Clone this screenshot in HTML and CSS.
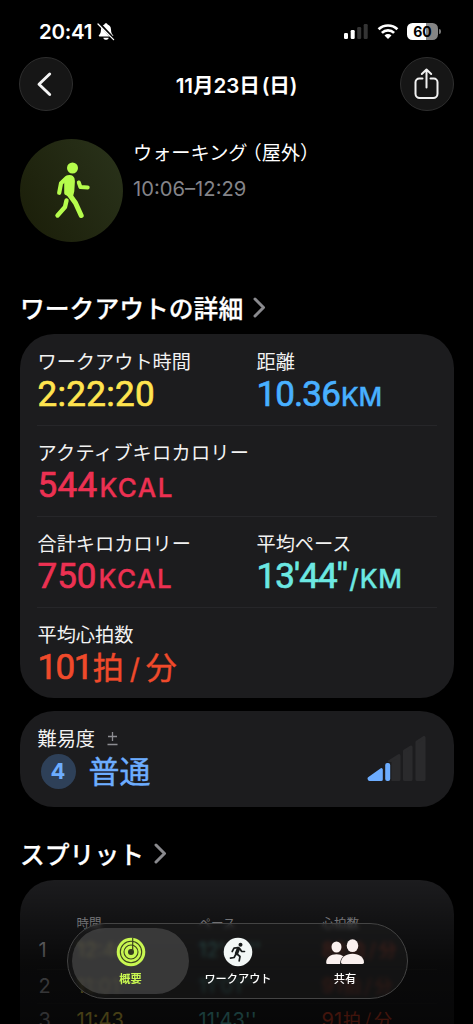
FILE: index.html
```html
<!DOCTYPE html>
<html lang="ja">
<head>
<meta charset="utf-8">
<title>ワークアウト</title>
<link rel="stylesheet" href="styles.css">
</head>
<body>
<div class="screen">
  <div class="status">
    <span class="clock">20:41</span>
    <svg class="bell" width="18" height="19" viewBox="0 0 18 19"><path d="M9 1.200c.9 0 1.500.6 1.600 1.400 2 .7 3.300 2.300 3.400 4.800.1 3 .7 4.300 2 5.700.5.6.2 1.400-.6 1.400H2.600c-.8 0-1.100-.8-.6-1.400 1.300-1.400 1.900-2.700 2-5.700C4.100 4.900 5.400 3.300 7.400 2.600 7.500 1.800 8.100 1.200 9 1.200z" fill="#fff"/><path d="M6.300 15.700h5.400c-.3 1.300-1.300 2.100-2.700 2.100s-2.400-.8-2.700-2.100z" fill="#fff"/><path d="M1.800 1l15 16" stroke="#000" stroke-width="2.600"/><path d="M1 2l15.600 15.600" stroke="#fff" stroke-width="1.300" stroke-linecap="round"/></svg>
    <svg class="cell" width="25" height="17" viewBox="0 0 25 17"><rect x="0" y="10" width="4" height="6" rx="1.200" fill="#fff"/><rect x="6.700" y="7" width="4" height="9" rx="1.200" fill="#fff"/><rect x="13.200" y="4" width="4" height="12" rx="1.200" fill="#343434"/><rect x="19.700" y="1" width="4" height="15" rx="1.200" fill="#343434"/></svg>
    <svg class="wifi" width="22" height="17" viewBox="0 0 22 17"><g fill="none" stroke="#fff" stroke-width="2.700"><path d="M1.600 6.300a13.500 13.500 0 0 1 18.800 0"/><path d="M4.900 9.900a8.800 8.800 0 0 1 12.200 0"/></g><path d="M11 16l-3.500-3.500a5 5 0 0 1 7 0z" fill="#fff"/></svg>
    <span class="battery"><span class="battery-body">60</span><i></i></span>
  </div>

  <header class="nav">
    <button class="round"><svg width="54" height="54" viewBox="0 0 54 54"><path d="M30.700 17l-10.700 10.300 10.700 10.200" fill="none" stroke="#f4f4f4" stroke-width="2.900" stroke-linecap="round" stroke-linejoin="round"/></svg></button>
    <h1>11月23日<span class="paren">(日)</span></h1>
    <button class="round"><svg width="54" height="54" viewBox="0 0 54 54"><g fill="none" stroke="#f2f2f2" stroke-width="2" stroke-linecap="round" stroke-linejoin="round"><path d="M22.500 21.500h-3.300a3.700 3.700 0 0 0-3.700 3.700v11.500a4.300 4.300 0 0 0 4.300 4.300h13.400a4.300 4.300 0 0 0 4.300-4.300V25.200a3.700 3.700 0 0 0-3.700-3.700h-3.300"/><path d="M26.500 30.500V13M21.800 17l4.700-4.500 4.700 4.500"/></g></svg></button>
  </header>

  <section class="hero">
    <div class="badge"><svg width="103" height="103" viewBox="0 0 103 103"><g fill="#b5fc4c" stroke="#b5fc4c" stroke-linecap="round" stroke-linejoin="round"><circle cx="52.500" cy="29" r="5.500" stroke="none"/><path d="M46.500 39L41 44.300l-1.800 9.500" fill="none" stroke-width="4.200"/><path d="M48 38.500Q52.700 37.500 52.600 42L52 52l-1 4-4.500-2V41z" stroke-width="4.600"/><path d="M49 55l6.500 9 5.700 12.500" fill="none" stroke-width="5"/><path d="M46.500 61.500L45 68l-7.500 8.500" fill="none" stroke-width="4.400"/><path d="M58.800 43.500l1.600 4.500 7.300.4" fill="none" stroke-width="4"/></g></svg></div>
    <div class="hero-text">
      <div class="sport">ウォーキング<span>（屋外）</span></div>
      <div class="range">10:06–12:29</div>
    </div>
  </section>

  <h2 class="details-title">ワークアウトの詳細<svg width="13" height="21" viewBox="0 0 13 21"><path d="M2 2l8.500 8.500L2 19" /></svg></h2>
  <section class="card metrics">
    <div class="row">
      <div class="metric"><span class="label">ワークアウト時間</span><span class="value yellow">2:22:20</span></div>
      <div class="metric"><span class="label">距離</span><span class="value blue distance">10.36<small>KM</small></span></div>
    </div>
    <div class="row">
      <div class="metric"><span class="label wide">アクティブキロカロリー</span><span class="value red">544<small>KCAL</small></span></div>
    </div>
    <div class="row">
      <div class="metric"><span class="label">合計キロカロリー</span><span class="value red total">750<small>KCAL</small></span></div>
      <div class="metric"><span class="label">平均ペース</span><span class="value cyan pace">13'44<span class="seconds">''</span><small>/KM</small></span></div>
    </div>
    <div class="row">
      <div class="metric"><span class="label">平均心拍数</span><span class="value orange heart">101<span class="unit">拍<b>/</b>分</span></span></div>
    </div>
  </section>

  <section class="card effort">
    <div>
      <div class="label">難易度<svg width="11" height="15" viewBox="0 0 11 15"><path d="M5.500 1v9M1 5.500h9M.5 13.500h10" stroke="#8d8d92" stroke-width="1.300" fill="none"/></svg></div>
      <div class="level"><span class="num">4</span><span class="word">普通</span></div>
    </div>
    <svg class="bars" width="59" height="46" viewBox="0 0 59 46"><g fill="#2a2a2c" stroke="#2a2a2c" stroke-width="3" stroke-linejoin="round"><path d="M22.500 25.500l9.500-6v24H22.500z"/><path d="M37.500 15l6.500-4v32.500h-6.500z"/><path d="M50 6l7-4.500v42h-7z"/></g><path d="M2 42.500l12.300-8.800v9.800H2.500z" fill="#6dadff" stroke="#6dadff" stroke-width="3" stroke-linejoin="round"/><rect x="17" y="26" width="7.500" height="20" fill="#1c1c1e"/><rect x="18.200" y="27" width="5" height="18" rx="2" fill="#6dadff"/></svg>
  </section>

  <h2 class="split-title">スプリット<svg width="13" height="21" viewBox="0 0 13 21"><path d="M2 2l8.500 8.500L2 19" /></svg></h2>
  <section class="card splits">
    <div class="srow head"><span></span><span>時間</span><span>ペース</span><span>心拍数</span></div>
    <div class="srow"><span>1</span><span class="y">12:46</span><span class="c">12'46''</span><span class="o">88<em>拍<b>/</b>分</em></span></div>
    <div class="srow"><span>2</span><span class="y">11:01</span><span class="c">11'01''</span><span class="o">91<em>拍<b>/</b>分</em></span></div>
    <div class="srow"><span>3</span><span class="y">11:43</span><span class="c">11'43''</span><span class="o">91<em>拍<b>/</b>分</em></span></div>
  </section>

  <div class="fade"></div>
  <nav class="tabs">
    <a class="tab active"><svg width="30" height="30" viewBox="0 0 30 30"><circle cx="15" cy="15" r="14.300" fill="#c8f751"/><g fill="none" stroke="#3b431f" stroke-width="1.100"><circle cx="15" cy="15" r="10.700"/><circle cx="15" cy="15" r="7"/></g><circle cx="15" cy="15" r="3" fill="#34391f"/><path d="M16.700 1v13" stroke="#3b431f" stroke-width="1.200"/></svg><span>概要</span></a>
    <a class="tab"><svg width="30" height="30" viewBox="0 0 30 30"><circle cx="15" cy="15" r="14.300" fill="#f2f7f6"/><circle cx="17.500" cy="7.800" r="2" fill="#171b1b"/><g fill="none" stroke="#171b1b" stroke-linecap="round" stroke-linejoin="round"><path d="M15.500 11.500l-2 5" stroke-width="3.400"/><path d="M15 10.700l-4 .5-1.800 3.300M17 12l1.500 2.300 3 .2M14 17l3 2.500-.8 4.300M12.700 17.500l-1.600 3-3.600.6" stroke-width="1.700"/></g></svg><span>ワークアウト</span></a>
    <a class="tab"><svg width="40" height="30" viewBox="0 0 40 30"><g fill="#fbf1ef"><ellipse cx="11.500" cy="10" rx="5" ry="5.600"/><path d="M1.200 25.500C1.200 20.500 5.500 17.200 11.500 17.200c3 0 5.200.8 6.800 2-2 1.800-3.200 4.600-3.200 7.800H2.700c-1 0-1.500-.5-1.500-1.500z"/><ellipse cx="27.500" cy="8.700" rx="5.800" ry="6.400"/><path d="M16 25.300c0-5 4.800-8.600 11.500-8.600S39 20.300 39 25.300c0 1.200-.6 1.700-1.700 1.700H17.700c-1.100 0-1.700-.5-1.700-1.700z"/></g></svg><span>共有</span></a>
  </nav>
</div>
</body>
</html>
```

FILE: styles.css
```css
* { box-sizing: border-box; }
body { margin: 0; background: #000; color: #fff; font-family: Inter, "Noto Sans CJK JP", sans-serif; }
.screen { position: relative; width: 473px; height: 1024px; overflow: hidden; background: #000; }
svg { display: block; flex: none; }
h1, h2 { margin: 0; font-weight: 600; }

.status { display: flex; align-items: center; height: 57px; padding: 6px 32px 0 39px; }
.clock { font-size: 20.5px; font-weight: 600; letter-spacing: -0.3px; }
.bell { margin-left: 5px; }
.cell { margin-left: auto; }
.wifi { margin-left: 8px; }
.battery { display: flex; align-items: center; margin-left: 8px; }
.battery-body { width: 31px; height: 17px; border-radius: 5.5px; background: linear-gradient(90deg, #fff 60%, #858585 60%); color: #000; font-size: 14px; font-weight: 700; line-height: 17px; text-align: center; }
.battery i { width: 2px; height: 5px; margin-left: 1px; border-radius: 0 2px 2px 0; background: #777; }

.nav { display: flex; align-items: center; justify-content: space-between; height: 54px; padding: 0 19px; }
.round { width: 54px; height: 54px; padding: 0; border: 1px solid #2e2e2e; border-radius: 50%; background: #161616; }
.round svg { margin: -1px; }
.nav h1 { font-size: 20.6px; letter-spacing: -0.1px; margin-top: -1px; }
.paren { margin-left: 2px; }

.hero { display: flex; height: 131px; padding: 28px 0 0 20px; gap: 10px; }
.badge { width: 103px; height: 103px; border-radius: 50%; background: linear-gradient(60deg, #1a1d08, #2a331b); }
.sport { height: 26px; margin-top: -1px; font: 400 19.2px/28px "Noto Sans CJK JP", sans-serif; white-space: nowrap; }
.sport span { margin-left: -5px; }
.range { margin-top: 11px; color: #848489; font-size: 20.2px; line-height: 28px; }

h2 { display: flex; align-items: center; padding-left: 20px; font: 500 24.8px/36px "Noto Sans CJK JP", sans-serif; -webkit-text-stroke: 0.25px #fff; }
h2 svg { margin-left: 10px; fill: none; stroke: #8a8a8e; stroke-width: 3; stroke-linecap: round; stroke-linejoin: round; }
.details-title { height: 36px; margin-top: 47px; }

.card { width: 434px; margin-left: 19.5px; border-radius: 34px; background: #1c1c1e; }
.metrics { height: 364px; margin-top: 9px; padding: 0 17px; }
.row { display: flex; height: 91px; padding-top: 13px; border-top: 1px solid transparent; }
.row + .row { border-top-color: #262629; }
.metric { flex: none; width: 218px; padding-left: 1px; white-space: nowrap; }
.metric + .metric { padding-left: 2px; }
.label { display: block; height: 26px; font: 400 19.2px/26px "Noto Sans CJK JP", sans-serif; letter-spacing: 0; color: #f2f2f2; }
.wide { letter-spacing: 0.25px; }
.value { display: flex; align-items: baseline; height: 40px; margin-top: 1px; font: 400 35px/40px Roboto, sans-serif; letter-spacing: 0.3px; -webkit-text-stroke: 0.7px currentColor; stroke-linejoin: round; }
.value small { margin-left: 2px; font: 500 26px/40px Inter, sans-serif; letter-spacing: 1.5px; -webkit-text-stroke-width: 0.3px; }
.distance { letter-spacing: -0.9px; }
.distance small { margin-left: 1px; letter-spacing: -0.2px; }
.total { letter-spacing: 0; }
.pace { letter-spacing: -0.9px; }
.pace small { margin-left: 0; letter-spacing: 0.8px; }
.seconds { letter-spacing: 1px; }
.heart { margin-top: -1px; letter-spacing: -1.6px; }
.unit { margin-left: 1px; font: 400 31px/40px "Noto Sans CJK JP", sans-serif; letter-spacing: 0; -webkit-text-stroke-width: 0.4px; }
.unit b { margin: 0 6px; font-family: Inter; font-weight: 400; font-size: 28px; }
.yellow { color: #ffe44f; }
.blue { color: #48b0ff; }
.red { color: #ec3152; }
.cyan { color: #6ce8e2; }
.orange { color: #f04a2b; }

.effort { display: flex; justify-content: space-between; height: 96px; margin-top: 13px; padding: 14px 28px 0 18px; }
.effort .label { display: flex; align-items: center; gap: 12px; }
.level { display: flex; align-items: center; height: 40px; padding-left: 3px; color: #6dadff; }
.num { width: 35px; height: 35px; border-radius: 50%; background: #2e4058; font-size: 22px; font-weight: 700; line-height: 35px; text-align: center; }
.word { margin: -2px 0 0 13px; font: 400 31px/40px "Noto Sans CJK JP", sans-serif; -webkit-text-stroke: 0.4px currentColor; }
.bars { margin-top: 11px; }

.split-title { height: 36px; margin-top: 28px; }
.splits { height: 180px; margin-top: 9px; padding: 33px 17px 0; }
.srow { display: grid; grid-template-columns: 38px 122px 123px 1fr; height: 34.5px; padding-left: 2px; font-size: 20px; line-height: 33px; white-space: nowrap; color: #b0b0b5; }
.srow + .srow + .srow { border-top: 1px solid #232323; }
.head { height: 21px; font-size: 12.5px; line-height: 22px; }
.srow em { margin-left: 1px; font: 400 18px/20px "Noto Sans CJK JP", sans-serif; }
.srow b { margin: 0 3px; font-weight: 400; }
.y { color: #ffe44f; }
.c { color: #5fd8d4; }
.o { color: #f04a2b; }
.fade { position: absolute; left: 0; right: 0; bottom: 0; height: 144px; background: linear-gradient(rgba(0,0,0,0), rgba(0,0,0,.36) 29%, rgba(0,0,0,.66) 58%, rgba(0,0,0,.74)); }

.tabs { position: absolute; left: 67px; top: 923px; display: flex; width: 341px; height: 76px; padding: 4px; border: 1px solid #444; border-radius: 38px; background: rgba(30,30,30,.5); backdrop-filter: blur(2px); }
.tab { display: flex; flex: none; flex-direction: column; align-items: center; width: 117px; height: 66px; padding-top: 9px; border-radius: 33px; font: 500 11.2px/18px "Noto Sans CJK JP", sans-serif; }
.tab + .tab { width: 98px; }
.tab + .tab + .tab { width: 116px; }
.tab span { margin-top: 2px; white-space: nowrap; }
.active { background: rgba(88,88,88,.55); color: #c8f751; font-weight: 700; }
```
